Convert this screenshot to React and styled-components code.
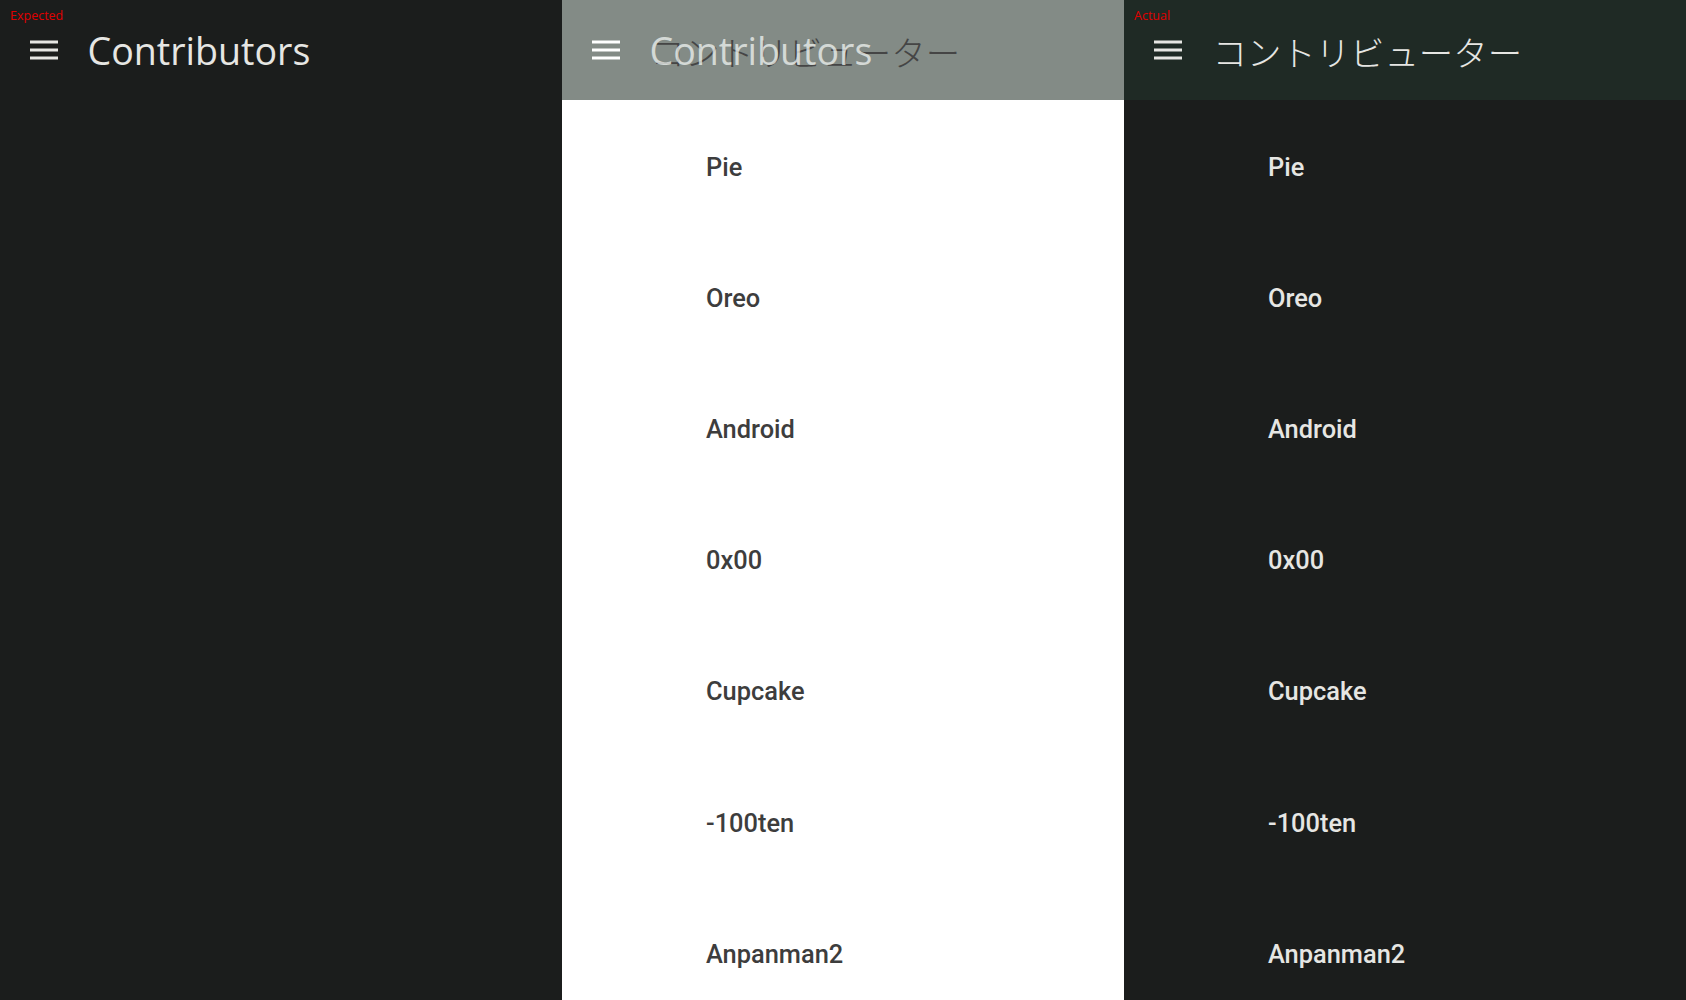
import React from 'react'
import styled, { createGlobalStyle } from 'styled-components'

const GlobalStyle = createGlobalStyle`
    html, body{
        margin: 0;
        padding: 0;
        background: #1b1d1c;
        font-family: Roboto, "Noto Sans", sans-serif;
    }
`;

const names = ['Pie', 'Oreo', 'Android', '0x00', 'Cupcake', '-100ten', 'Anpanman2'];

const themes = {
    expected: { panel: '#1b1d1c', header: '#1b1d1c', text: '#e6e6e3', icon: '#e6e6e3' },
    diff: { panel: '#ffffff', header: '#838b86', text: '#3d3d3d', icon: '#ffffff' },
    actual: { panel: '#1b1d1c', header: '#1f2a25', text: '#e6e6e3', icon: '#e6e6e3' },
};

function MenuIcon({ color }) {
    return (
        <IconBox viewBox="0 0 28 20" width="28" height="20">
            <rect x="0" y="0.5" width="28" height="3" fill={color} />
            <rect x="0" y="8.5" width="28" height="3" fill={color} />
            <rect x="0" y="16.5" width="28" height="3" fill={color} />
        </IconBox>
    )
}

function Panel({ kind, label, showList }) {
    const t = themes[kind];
    return (
        <PanelStyled $bg={t.panel}>
            {label && <Label>{label}</Label>}
            <Header $bg={t.header}>
                <MenuIcon color={t.icon} />
                {kind === 'expected' && <Title $color={t.text}>Contributors</Title>}
                {kind === 'actual' && <TitleJa $color={t.text}>コントリビューター</TitleJa>}
                {kind === 'diff' && (
                    <TitleStack>
                        <TitleJa $color="#454545">コントリビューター</TitleJa>
                        <GhostTitle>Contributors</GhostTitle>
                    </TitleStack>
                )}
            </Header>
            {showList && (
                <List>
                    {names.map((name) => (
                        <Row key={name} $color={t.text}>{name}</Row>
                    ))}
                </List>
            )}
        </PanelStyled>
    )
}

function App() {
    return (
        <>
            <GlobalStyle />
            <Page>
                <Panel kind="expected" label="Expected" />
                <Panel kind="diff" showList />
                <Panel kind="actual" label="Actual" showList />
            </Page>
        </>
    )
}

const Page = styled.div`
    display: flex;
    width: 1686px;
    height: 1000px;
    overflow: hidden;
`;

const PanelStyled = styled.div`
    position: relative;
    width: 562px;
    height: 1000px;
    flex-shrink: 0;
    background: ${(p) => p.$bg};
    overflow: hidden;
`;

const Label = styled.span`
    position: absolute;
    top: 8px;
    left: 10px;
    font-family: "Open Sans", "Liberation Sans", sans-serif;
    font-size: 12.5px;
    line-height: 16px;
    color: #e00000;
`;

const Header = styled.div`
    display: flex;
    align-items: center;
    height: 100px;
    padding-left: 29.5px;
    background: ${(p) => p.$bg};
`;

const IconBox = styled.svg`
    display: block;
    flex-shrink: 0;
`;

const Title = styled.h1`
    margin: 0 0 0 30px;
    font-family: "Open Sans", Lato, sans-serif;
    font-weight: 400;
    font-size: 37.6px;
    color: ${(p) => p.$color};
`;

const TitleJa = styled.h1`
    margin: 2px 0 0 31px;
    font-family: "Noto Sans CJK JP", "Noto Sans", sans-serif;
    font-weight: 300;
    font-size: 34.4px;
    color: ${(p) => p.$color};
`;

const TitleStack = styled.div`
    position: relative;
    display: flex;
    align-items: center;
`;

const GhostTitle = styled.span`
    position: absolute;
    left: 30px;
    top: 50%;
    transform: translateY(-50%);
    font-family: "Open Sans", Lato, sans-serif;
    font-size: 37.6px;
    color: rgba(240, 244, 241, 0.75);
    white-space: nowrap;
`;

const List = styled.ul`
    list-style: none;
    margin: 1px 0 0;
    padding: 0;
`;

const Row = styled.li`
    display: flex;
    align-items: center;
    height: 131.2px;
    padding-left: 144px;
    font-family: Roboto, "Noto Sans", sans-serif;
    font-weight: 500;
    font-size: 25.4px;
    color: ${(p) => p.$color};
`;

export default App
